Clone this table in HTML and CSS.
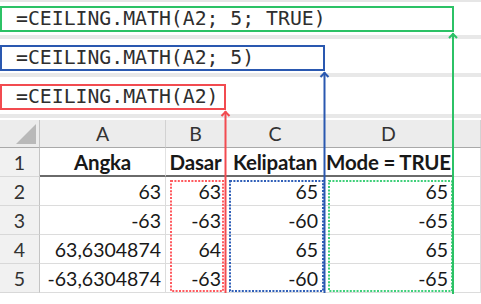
FILE: index.html
```html
<!DOCTYPE html>
<html>
<head>
<meta charset="utf-8">
<link rel="stylesheet" href="styles.css">
</head>
<body>
<div class="page">
  <div class="formulas">
    <div class="frow r1"><div class="fbox green">=CEILING.MATH(A2; 5; TRUE)</div></div>
    <div class="frow r2"><div class="fbox blue">=CEILING.MATH(A2; 5)</div></div>
    <div class="frow r3"><div class="fbox red">=CEILING.MATH(A2)</div></div>
  </div>
  <div class="sheet">
    <div class="cell corner"><svg width="20" height="20" viewBox="0 0 20 20"><polygon points="20,0 20,20 0,20" fill="#b9b9b9"/></svg></div>
    <div class="cell colh">A</div>
    <div class="cell colh">B</div>
    <div class="cell colh">C</div>
    <div class="cell colh">D</div>
    <div class="cell colh blank"></div>

    <div class="cell rowh">1</div>
    <div class="cell head">Angka</div>
    <div class="cell head">Dasar</div>
    <div class="cell head">Kelipatan</div>
    <div class="cell head">Mode = TRUE</div>
    <div class="cell"></div>

    <div class="cell rowh">2</div>
    <div class="cell num">63</div>
    <div class="cell num">63</div>
    <div class="cell num c">65</div>
    <div class="cell num">65</div>
    <div class="cell"></div>

    <div class="cell rowh">3</div>
    <div class="cell num">-63</div>
    <div class="cell num">-63</div>
    <div class="cell num c">-60</div>
    <div class="cell num">-65</div>
    <div class="cell"></div>

    <div class="cell rowh">4</div>
    <div class="cell num">63,6304874</div>
    <div class="cell num">64</div>
    <div class="cell num c">65</div>
    <div class="cell num">65</div>
    <div class="cell"></div>

    <div class="cell rowh">5</div>
    <div class="cell num">-63,6304874</div>
    <div class="cell num">-63</div>
    <div class="cell num c">-60</div>
    <div class="cell num">-65</div>
    <div class="cell"></div>
  </div>
  <svg class="overlay" width="481" height="304" viewBox="0 0 481 304">
    <g fill="none" stroke-width="2">
      <rect x="171" y="181" width="52" height="110" stroke="#ff5a5f" stroke-dasharray="2 1.4"/>
      <rect x="230" y="181" width="93" height="110" stroke="#2f5fb8" stroke-dasharray="2 1.4"/>
      <rect x="329" y="181" width="123" height="110" stroke="#3fd07a" stroke-dasharray="2 1.4"/>
      <line x1="225.5" y1="111" x2="225.5" y2="293" stroke="#f24b50"/>
      <path d="M221.5 116 L225.5 112 L229.5 116" stroke="#f24b50"/>
      <line x1="324.5" y1="72" x2="324.5" y2="293" stroke="#2a58b0"/>
      <path d="M320.5 77 L324.5 73 L328.5 77" stroke="#2a58b0"/>
      <line x1="453" y1="33" x2="453" y2="294" stroke="#2cc266"/>
      <path d="M449 38 L453 34 L457 38" stroke="#2cc266"/>
    </g>
  </svg>
</div>
</body>
</html>
```
FILE: styles.css
```css
html, body {
  margin: 0;
  padding: 0;
  background: #ffffff;
}
.page {
  position: relative;
  width: 481px;
  height: 304px;
  overflow: hidden;
  background: #fff;
}
.formulas {
  border-top: 2px solid #e6e6e6;
  margin-bottom: 2px;
}
.frow {
  border-bottom: 4px solid #e8e8e8;
}
.r1 { padding: 4px 0 3px; }
.r2 { padding: 6px 0 2px; }
.r3 { padding: 7px 0 4px; }
.fbox {
  box-sizing: border-box;
  height: 26px;
  border: 2px solid;
  padding-left: 14px;
  font-family: "DejaVu Sans Mono", monospace;
  font-size: 19.8px;
  line-height: 22px;
  color: #2e2e2e;
  white-space: pre;
}
.green { width: 454px; border-color: #2cc266; }
.blue { width: 325px; border-color: #2a58b0; }
.red { width: 226px; border-color: #f24b50; }

.sheet {
  display: grid;
  grid-template-columns: 40px 126px 60px 99px 128px 28px;
  grid-template-rows: 28px 29px 29px 29px 29px 29px;
  font-family: "Lato", "Liberation Sans", sans-serif;
  font-size: 19.5px;
  color: #181818;
}
.cell {
  box-sizing: border-box;
  border-right: 1px solid #dcdcdc;
  border-bottom: 1px solid #dcdcdc;
  display: flex;
  align-items: center;
  white-space: nowrap;
  overflow: hidden;
}
.corner {
  background: #ececec;
  border-right: 1px solid #c4c4c4;
  border-bottom: 1px solid #a9a9a9;
  justify-content: flex-end;
  align-items: flex-end;
  padding: 0 3px 3px 0;
}
.colh {
  background: #ececec;
  justify-content: center;
  color: #333;
  border-right: 1px solid #d2d2d2;
  border-bottom: 1px solid #a9a9a9;
}
.rowh {
  background: #f1f1f1;
  justify-content: center;
  color: #333;
  border-right: 1px solid #c4c4c4;
  border-bottom: 1px solid #d8d8d8;
}
.head {
  font-weight: 700;
  font-size: 20.5px;
  letter-spacing: -0.2px;
  justify-content: center;
  border-bottom: 2px solid #6a6a6a;
  border-right-color: #e2e2e2;
}
.num {
  justify-content: flex-end;
  padding-right: 4px;
}
.num.c { padding-right: 6px; }
.overlay {
  position: absolute;
  left: 0;
  top: 0;
}
```
